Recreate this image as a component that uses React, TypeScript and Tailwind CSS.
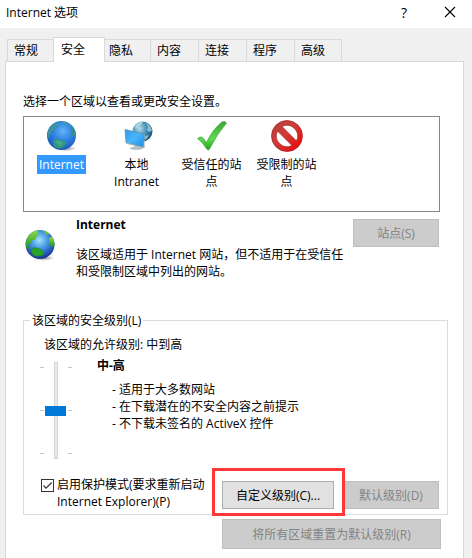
import { useState } from "react"

interface Zone {
  id: number;
  nome: string;
  icon: React.ReactNode;
}

const tabs = ["常规", "安全", "隐私", "内容", "连接", "程序", "高级"]

function GlobeIcon() {
  return (
    <svg width="32" height="32" viewBox="0 0 32 32" aria-hidden="true">
      <defs>
        <radialGradient id="sea" cx="0.55" cy="0.35" r="0.65">
          <stop offset="0" stopColor="#63b4f6" />
          <stop offset="0.5" stopColor="#2f84e2" />
          <stop offset="1" stopColor="#1a58bd" />
        </radialGradient>
        <radialGradient id="shade">
          <stop offset="0" stopColor="#666" stopOpacity="0.7" />
          <stop offset="1" stopColor="#888" stopOpacity="0" />
        </radialGradient>
      </defs>
      <ellipse cx="20" cy="28.500" rx="11" ry="3" fill="url(#shade)" />
      <circle cx="15.500" cy="15.500" r="14.500" fill="url(#sea)" />
      <path d="M2.500 9 Q5.500 4 10 2.500 L13 3 L11 5 L13 7 L10 8 L9 11 L6 11 L5 14 L3 15 L4 18 L1.500 17 Q1 12 2.500 9 Z" fill="#3f93a0" />
      <path d="M15 1.200 Q20 1.500 23.500 4 L20 4.500 L17 3.500 Z" fill="#479a9a" />
      <path d="M24 6 L26 6 Q30 10 29.700 16 L27.500 17 L25 14 L25.500 10 Z" fill="#35908c" />
      <path d="M7 20.500 L11 18.500 L15 20 L20 21.500 L20.500 24 L16 28 Q11 29.500 7.500 26 Z" fill="#33967f" />
      <path d="M9 21.500 L12 20 L17 22.500 L14 26 Z" fill="#55b792" opacity="0.600" />
    </svg>
  )
}

function ZoneGlobeIcon() {
  return (
    <svg width="32" height="32" viewBox="0 0 32 32" aria-hidden="true">
      <defs>
        <radialGradient id="zoneSea" cx="0.48" cy="0.35" r="0.65">
          <stop offset="0" stopColor="#a5e4ff" />
          <stop offset="0.4" stopColor="#4a9fe4" />
          <stop offset="0.8" stopColor="#2456b8" />
          <stop offset="1" stopColor="#1a2f88" />
        </radialGradient>
        <radialGradient id="zoneShade">
          <stop offset="0" stopColor="#555" stopOpacity="0.7" />
          <stop offset="1" stopColor="#888" stopOpacity="0" />
        </radialGradient>
        <linearGradient id="land" x1="0" y1="0" x2="0" y2="1">
          <stop offset="0" stopColor="#8cd848" />
          <stop offset="1" stopColor="#1f931f" />
        </linearGradient>
      </defs>
      <ellipse cx="19" cy="29" rx="11" ry="3" fill="url(#zoneShade)" />
      <circle cx="15" cy="15.500" r="14.500" fill="url(#zoneSea)" />
      <path d="M2 9 Q5 3.500 11 1.800 L14 3 L12 5 L13 7 L11 8 L10 11 L7 11 L6 14 L3 15 L4 18 L5 20 L1.500 19 Q0 14 2 9 Z" fill="url(#land)" />
      <path d="M17 1.300 Q22 2 25 5 L21 5.500 L19 3 Z" fill="#6fc542" />
      <path d="M25 8 L27 8 Q30 12 29.500 17 L27 18 L24 15 L24 11 Z" fill="url(#land)" />
      <path d="M5.500 21 L10 18.500 L15 20 L19 23.500 L18 26 L12 27.500 L8 26 Z" fill="#28a428" stroke="#1b7d22" strokeWidth="0.500" />
    </svg>
  )
}

function IntranetIcon() {
  return (
    <svg width="32" height="32" viewBox="0 0 32 32" aria-hidden="true">
      <defs>
        <radialGradient id="netSea" cx="0.35" cy="0.35" r="0.7">
          <stop offset="0" stopColor="#b5dcea" />
          <stop offset="0.5" stopColor="#4a94b8" />
          <stop offset="1" stopColor="#15527a" />
        </radialGradient>
        <linearGradient id="screen" x1="0" y1="0" x2="1" y2="1">
          <stop offset="0" stopColor="#2a9bec" />
          <stop offset="0.5" stopColor="#48b6fa" />
          <stop offset="1" stopColor="#1b8de0" />
        </linearGradient>
      </defs>
      <circle cx="21.500" cy="11.500" r="10" fill="url(#netSea)" />
      <path d="M14 6 Q17 2 22 1.800 L20 5 L17 7 L15 9 Z" fill="#a9d6df" />
      <path d="M25 3 Q30 5.500 31 10.500 L28 12 L26 10 L27 7 Z" fill="#8bbfce" />
      <path d="M24 16 L28 15 L26 18.500 L24 20 Z" fill="#83bccb" />
      <path d="M15 24 L19 25 L19 27 L22 28 Q18 30.500 9 28.500 L14 27 Z" fill="#b9c3c9" stroke="#8b979e" strokeWidth="0.500" />
      <path d="M4 9.500 L22.500 14 L22.500 27 L5 22.500 Z" fill="url(#screen)" stroke="#5f90b0" strokeWidth="0.800" />
      <path d="M23.300 14 L23.300 27.800 L5 23.400" fill="none" stroke="#9fb0ba" strokeWidth="0.800" />
    </svg>
  )
}

function TrustedIcon() {
  return (
    <svg width="32" height="32" viewBox="0 0 32 32" aria-hidden="true">
      <defs>
        <linearGradient id="tick" x1="0" y1="0" x2="0" y2="1">
          <stop offset="0" stopColor="#3aa43a" />
          <stop offset="0.6" stopColor="#5cdc4c" />
          <stop offset="1" stopColor="#23a01e" />
        </linearGradient>
      </defs>
      <path d="M1.500 18.500 Q4 16 6.500 17.500 L10.500 22.500 Q17 9 26 2 Q29 0.500 30.500 3 Q21 14 14 28 Q12.500 31.500 10.500 28.500 Q6 21.500 1.500 18.500 Z" fill="url(#tick)" stroke="#2f9e2f" strokeWidth="0.700" />
    </svg>
  )
}

function RestrictedIcon() {
  return (
    <svg width="32" height="32" viewBox="0 0 32 32" aria-hidden="true">
      <defs>
        <linearGradient id="ban" x1="0" y1="0" x2="1" y2="1">
          <stop offset="0" stopColor="#b8433f" />
          <stop offset="0.45" stopColor="#cf3b38" />
          <stop offset="1" stopColor="#f00000" />
        </linearGradient>
      </defs>
      <path
        fillRule="evenodd"
        d="M16 0.500 A15.500 15.500 0 1 1 16 31.500 A15.500 15.500 0 1 1 16 0.500 Z M11 6.500 L25.500 21 A10.800 10.800 0 0 0 11 6.500 Z M6.500 11 A10.800 10.800 0 0 0 21 25.500 Z"
        fill="url(#ban)"
        stroke="#a3201f"
        strokeWidth="0.700"
      />
    </svg>
  )
}

const zones: Zone[] = [
  { id: 1, nome: "Internet", icon: <GlobeIcon /> },
  { id: 2, nome: "本地 Intranet", icon: <IntranetIcon /> },
  { id: 3, nome: "受信任的站点", icon: <TrustedIcon /> },
  { id: 4, nome: "受限制的站点", icon: <RestrictedIcon /> },
]

const disabledButton = "border border-[#bfbfbf] bg-[#cccccc] text-[#838383]"

function Ticks() {
  return (
    <div className="flex flex-col justify-between py-[5px]">
      <span className="h-px w-1 bg-[#c4c4c4]" />
      <span className="h-px w-1 bg-[#c4c4c4]" />
      <span className="h-px w-1 bg-[#c4c4c4]" />
    </div>
  )
}

export default function App() {
  const [tab, setTab] = useState("安全");
  const [zone, setZone] = useState(1);
  const [level, setLevel] = useState(2);
  const [protectedMode, setProtectedMode] = useState(true);

  return (
    <div className="flex min-h-screen flex-col bg-[#f0f0f0] font-['Open_Sans','Noto_Sans_CJK_SC',sans-serif] text-[12px] leading-[17px] text-black">
      <header className="flex h-7 items-center bg-white pl-1.5 pr-4 pb-1">
        <h1 className="flex-1">Internet 选项</h1>
        <button aria-label="帮助" className="w-4 text-[14px] font-medium">?</button>
        <button aria-label="关闭" className="ml-8">
          <svg width="12" height="12" viewBox="0 0 12 12" aria-hidden="true">
            <path d="M1 1 L11 11 M11 1 L1 11" stroke="#000" strokeWidth="1.100" fill="none" />
          </svg>
        </button>
      </header>

      <div role="tablist" className="flex items-end pl-[7px] pt-[9px]">
        {tabs.map((nome) => (
          <button
            key={nome}
            role="tab"
            aria-selected={nome === tab}
            onClick={() => setTab(nome)}
            className={
              nome === tab
                ? "relative z-10 -mb-px -ml-[2px] -mr-[3px] h-[25px] w-[52px] border border-b-0 border-[#d9d9d9] bg-white pb-0.5 pl-[7px] text-left"
                : "h-[22px] w-12 border-l border-t border-[#d9d9d9] pl-1.5 text-left last:border-r"
            }
          >
            {nome}
          </button>
        ))}
      </div>

      <main className="ml-[5px] mr-2 flex-1 border-x border-t border-[#d9d9d9] bg-white pb-2 pl-[17px] pr-[15px] pt-[31px]">
        <p id="zone-label">选择一个区域以查看或更改安全设置。</p>
        <ul role="listbox" aria-labelledby="zone-label" className="mr-2 mt-1.5 flex h-24 border border-[#828790] bg-white pt-[3px]">
          {zones.map((z) => (
            <li
              key={z.id}
              role="option"
              aria-selected={z.id === zone}
              onClick={() => setZone(z.id)}
              className="flex w-[75px] flex-col items-center text-center"
            >
              {z.icon}
              <span className={z.id === zone ? "mt-[3px] bg-[#3399ff] px-0.5 py-px text-white" : "mt-[3px] max-w-16 px-0.5 py-px"}>
                {z.nome}
              </span>
            </li>
          ))}
        </ul>

        <section className="mr-[9px] mt-1 flex items-start">
          <div className="mt-[13px] w-[53px] pl-0.5">
            <ZoneGlobeIcon />
          </div>
          <div className="flex-1">
            <h2 className="font-bold">Internet</h2>
            <p className="mt-[13px]">该区域适用于 Internet 网站，但不适用于在受信任和受限制区域中列出的网站。</p>
          </div>
          <button disabled className={`mt-[3px] h-7 w-[86px] ${disabledButton}`}>站点(S)</button>
        </section>

        <fieldset className="mt-8 border border-[#dcdcdc] pb-1 pr-2">
          <legend className="ml-1.5 px-0.5">该区域的安全级别(L)</legend>
          <p className="ml-5 mt-[7px]">该区域的允许级别: 中到高</p>
          <div className="mt-1 flex pl-4">
            <div className="mt-[5px] flex h-[97px] w-8">
              <Ticks />
              <input
                type="range"
                aria-label="该区域的安全级别"
                min={1}
                max={3}
                value={level}
                onChange={(e) => setLevel(Number(e.target.value))}
                className="h-full w-6 appearance-none bg-transparent [writing-mode:vertical-lr] [&::-webkit-slider-runnable-track]:h-full [&::-webkit-slider-runnable-track]:w-1 [&::-webkit-slider-runnable-track]:border [&::-webkit-slider-runnable-track]:border-[#d6d6d6] [&::-webkit-slider-runnable-track]:bg-[#e7eaea] [&::-webkit-slider-thumb]:-ml-[10px] [&::-webkit-slider-thumb]:h-[10px] [&::-webkit-slider-thumb]:w-[21px] [&::-webkit-slider-thumb]:appearance-none [&::-webkit-slider-thumb]:bg-[#0078d7]"
              />
              <Ticks />
            </div>
            <div className="ml-[25px]">
              <h3 className="font-bold">中-高</h3>
              <ul className="ml-[15px] mt-[7px]">
                <li>- 适用于大多数网站</li>
                <li>- 在下载潜在的不安全内容之前提示</li>
                <li>- 不下载未签名的 ActiveX 控件</li>
              </ul>
            </div>
          </div>

          <div className="mt-[17px] flex items-start pl-[17px]">
            <span className="mt-[3px] grid">
              <input
                id="protected-mode"
                type="checkbox"
                checked={protectedMode}
                onChange={(e) => setProtectedMode(e.target.checked)}
                className="peer col-start-1 row-start-1 size-[13px] appearance-none border border-[#333333] bg-white"
              />
              <svg className="pointer-events-none invisible col-start-1 row-start-1 peer-checked:visible" width="13" height="13" viewBox="0 0 13 13" aria-hidden="true">
                <path d="M2.500 6.500 L5 9.200 L10.700 3.500" stroke="#333" strokeWidth="1.200" fill="none" />
              </svg>
            </span>
            <label htmlFor="protected-mode" className="ml-[3px] flex-1 whitespace-nowrap">
              启用保护模式(要求重新启动
              <br />
              Internet Explorer)(P)
            </label>
            <div className="mt-[5px] flex gap-[9px]">
              <div className="relative z-10">
                <button className="h-7 w-[112px] border border-[#adadad] bg-[#e1e1e1]">自定义级别(C)...</button>
                <span className="pointer-events-none absolute -bottom-[7px] -left-[10px] -right-[11px] -top-[13px] border-3 border-[#ff3737]" />
              </div>
              <button disabled className={`h-7 w-24 ${disabledButton}`}>默认级别(D)</button>
            </div>
          </div>
        </fieldset>
        <div className="mr-[7px] mt-1 flex justify-end">
          <button disabled className={`h-[30px] w-[219px] ${disabledButton}`}>将所有区域重置为默认级别(R)</button>
        </div>
      </main>
    </div>
  )
}
